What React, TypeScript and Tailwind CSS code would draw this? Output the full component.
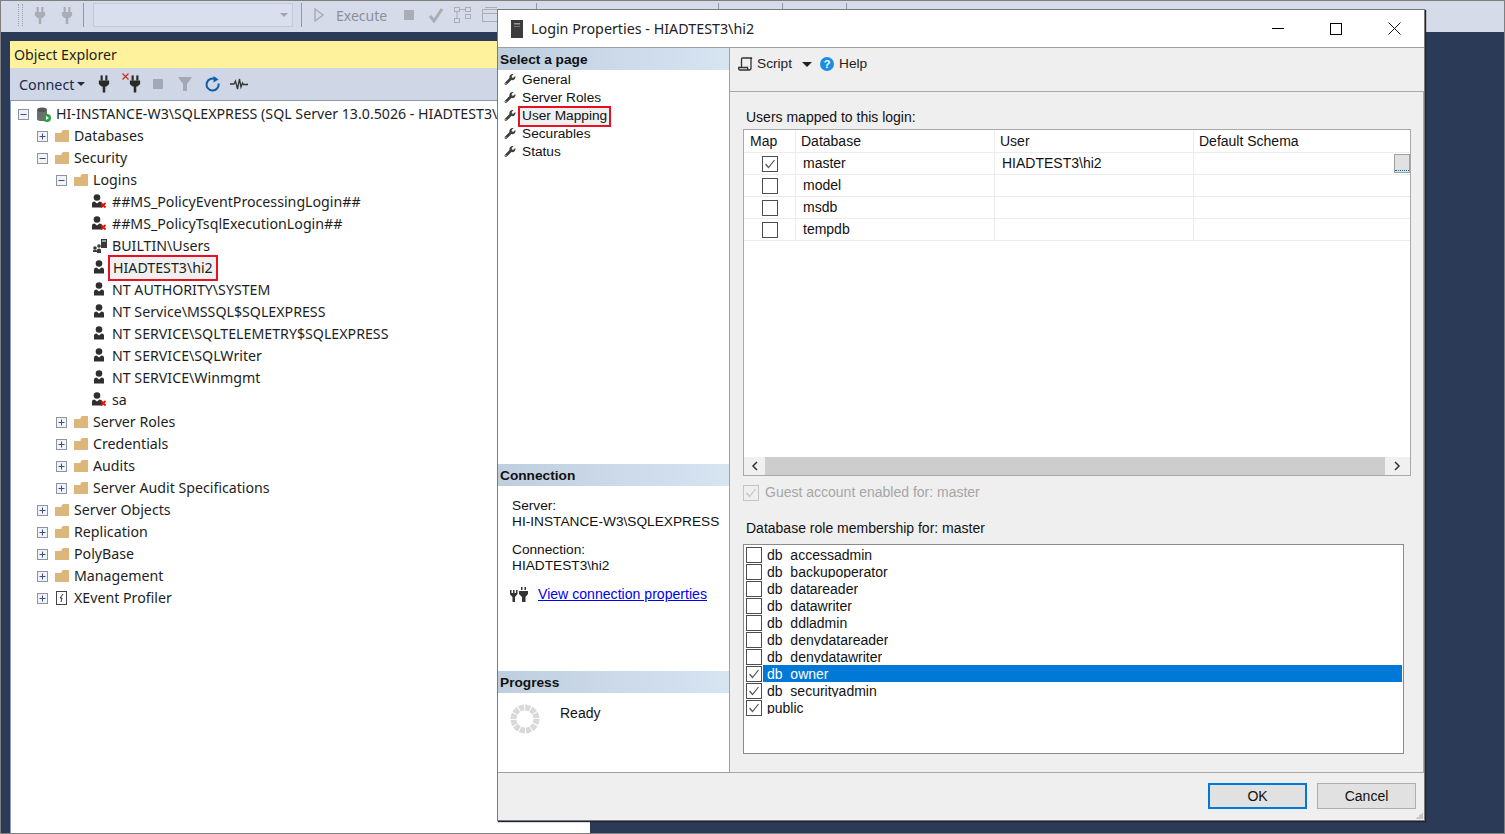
import { FaWrench } from "react-icons/fa";

const segoe = "font-['Noto_Sans',sans-serif]";
const arial = "font-['Liberation_Sans',Arial,sans-serif]";

function Plug({ className = "" }: { className?: string }) {
  return (
    <svg viewBox="0 0 14 20" className={className} fill="currentColor">
      <rect x="3" y="0" width="2.5" height="6" />
      <rect x="8.5" y="0" width="2.5" height="6" />
      <path d="M1 6h12v4l-3 3H8.5v7h-3v-7H4l-3-3z" />
    </svg>
  );
}

function Person({ off }: { off?: boolean }) {
  return (
    <svg width="16" height="16" viewBox="0 0 16 16" className="shrink-0">
      <g transform={off ? "translate(-1 0)" : "translate(1 0)"}>
        <circle cx="6" cy="3.5" r="3.3" fill="#2f2f2f" />
        <path d="M1 13.500V9.500Q1 7.500 3.500 7.500L6 9.500l2.500-2Q11 7.500 11 9.500v4z" fill="#2f2f2f" />
      </g>
      {off ? (
        <path d="M9 9l4.500 4.500m0-4.500L9 13.500" stroke="#e51400" strokeWidth="1.800" />
      ) : null}
    </svg>
  );
}

function Group() {
  return (
    <svg width="16" height="16" viewBox="0 0 16 16" className="shrink-0">
      <rect x="9" y="1" width="6" height="9" fill="#3a3a3a" />
      <rect x="10" y="2.500" width="4" height="1" fill="#fff" />
      <circle cx="7" cy="8" r="1.800" fill="#3a3a3a" />
      <circle cx="3" cy="10" r="1.800" fill="#3a3a3a" />
      <path d="M5 15v-3q0-1.500 2-1.500t2 1.500v3zM1 14v-1.500Q1 11.800 3 11.800t2 .7V14z" fill="#3a3a3a" />
    </svg>
  );
}

function Folder() {
  return (
    <svg width="14" height="12" viewBox="0 0 14 12" className="shrink-0">
      <path d="M0 3h6.500V1.500L8 0h6v12H0z" fill="#dcb67a" />
    </svg>
  );
}

function Expander({ open }: { open?: boolean }) {
  return (
    <svg width="11" height="11" viewBox="0 0 11 11" className="shrink-0">
      <rect x=".5" y=".5" width="10" height="10" fill="#f2f3f7" stroke="#8d93a3" />
      <rect x="2.500" y="5" width="6" height="1" fill="#3b4f81" />
      {open ? null : <rect x="5" y="2.500" width="1" height="6" fill="#3b4f81" />}
    </svg>
  );
}

function Check({ checked, disabled, className = "" }: { checked?: boolean; disabled?: boolean; className?: string }) {
  return (
    <span
      className={`flex h-4 w-4 shrink-0 items-center justify-center border bg-transparent ${
        disabled ? "border-[#c4c4c4]" : "border-[#4d4d4d] bg-white"
      } ${className}`}
    >
      {checked ? (
        <svg width="12" height="10" viewBox="0 0 12 10" fill="none">
          <path d="M1.500 5l3 3.500 6-7.500" stroke={disabled ? "#c4c4c4" : "#555"} strokeWidth="1.200" />
        </svg>
      ) : null}
    </span>
  );
}

type Node = { label: string; level: number; kind: "db" | "folder" | "xe" | "user" | "off" | "group"; open?: boolean; leaf?: boolean; mark?: boolean };

const nodes: Node[] = [
  { label: "HI-INSTANCE-W3\\SQLEXPRESS (SQL Server 13.0.5026 - HIADTEST3\\hi2)", level: 0, kind: "db", open: true },
  { label: "Databases", level: 1, kind: "folder" },
  { label: "Security", level: 1, kind: "folder", open: true },
  { label: "Logins", level: 2, kind: "folder", open: true },
  { label: "##MS_PolicyEventProcessingLogin##", level: 3, kind: "off", leaf: true },
  { label: "##MS_PolicyTsqlExecutionLogin##", level: 3, kind: "off", leaf: true },
  { label: "BUILTIN\\Users", level: 3, kind: "group", leaf: true },
  { label: "HIADTEST3\\hi2", level: 3, kind: "user", leaf: true, mark: true },
  { label: "NT AUTHORITY\\SYSTEM", level: 3, kind: "user", leaf: true },
  { label: "NT Service\\MSSQL$SQLEXPRESS", level: 3, kind: "user", leaf: true },
  { label: "NT SERVICE\\SQLTELEMETRY$SQLEXPRESS", level: 3, kind: "user", leaf: true },
  { label: "NT SERVICE\\SQLWriter", level: 3, kind: "user", leaf: true },
  { label: "NT SERVICE\\Winmgmt", level: 3, kind: "user", leaf: true },
  { label: "sa", level: 3, kind: "off", leaf: true },
  { label: "Server Roles", level: 2, kind: "folder" },
  { label: "Credentials", level: 2, kind: "folder" },
  { label: "Audits", level: 2, kind: "folder" },
  { label: "Server Audit Specifications", level: 2, kind: "folder" },
  { label: "Server Objects", level: 1, kind: "folder" },
  { label: "Replication", level: 1, kind: "folder" },
  { label: "PolyBase", level: 1, kind: "folder" },
  { label: "Management", level: 1, kind: "folder" },
  { label: "XEvent Profiler", level: 1, kind: "xe" },
];

const indent = ["pl-[7px]", "pl-[26px]", "pl-[45px]", "pl-[63px]"];

function NodeIcon({ kind }: { kind: Node["kind"] }) {
  if (kind === "folder") return <Folder />;
  if (kind === "user") return <Person />;
  if (kind === "off") return <Person off />;
  if (kind === "group") return <Group />;
  if (kind === "xe")
    return (
      <svg width="14" height="14" viewBox="0 0 14 14" className="shrink-0">
        <rect x="1.500" y=".5" width="10" height="13" fill="#fff" stroke="#444" />
        <path d="M8 3L5 7h2l-1 4" stroke="#333" fill="none" />
      </svg>
    );
  return (
    <svg width="15" height="15" viewBox="0 0 15 15" className="shrink-0">
      <ellipse cx="6" cy="3" rx="5" ry="2.500" fill="#555" />
      <path d="M1 3v9q0 2 5 2t5-2V3q0 2-5 2T1 3z" fill="#6e6e6e" />
      <circle cx="11" cy="11" r="4" fill="#2f9e44" />
      <path d="M10 9l3 2-3 2z" fill="#fff" />
    </svg>
  );
}

function TreeRow({ node }: { node: Node }) {
  const slot = node.level === 1 || node.level === 2 ? "w-[19px]" : "w-[20px]";
  return (
    <div className={`flex h-[22px] items-center whitespace-nowrap ${indent[node.level]}`}>
      <span className="flex w-[11px] shrink-0">{node.leaf ? null : <Expander open={node.open} />}</span>
      <span className={`ml-[7px] flex ${slot} shrink-0 items-center`}>
        <NodeIcon kind={node.kind} />
      </span>
      <span
        className={
          node.mark
            ? "relative z-0 -mx-[2px] bg-[#f0f0f0] px-[3px] outline-2 outline-[#e81123]"
            : ""
        }
      >
        {node.label}
      </span>
    </div>
  );
}

function TopToolbar() {
  return (
    <div className={`flex h-[31px] shrink-0 items-center bg-[#d5dbe9] pb-[3px] text-[#8b8f99] ${segoe}`}>
      <span className="ml-[17px] h-[22px] w-[5px] border-x border-dotted border-[#9aa0ad]" />
      <Plug className="ml-[11px] h-[17px] w-[12px] text-[#a9adb6]" />
      <Plug className="ml-[14px] h-[17px] w-[14px] text-[#a9adb6]" />
      <span className="ml-[9px] h-[24px] w-px bg-[#9097a6]" />
      <span className="ml-[9px] flex h-[24px] w-[200px] items-center justify-end border border-[#c3cbdb] bg-[#d9dfec] pr-[4px]">
        <span className="h-0 w-0 border-x-[4px] border-t-[4px] border-x-transparent border-t-[#a0a4ae]" />
      </span>
      <span className="ml-[8px] h-[24px] w-px bg-[#9097a6]" />
      <svg width="12" height="14" viewBox="0 0 12 14" className="ml-[11px]" fill="none">
        <path d="M2 1l8 6-8 6z" stroke="#a9adb6" strokeWidth="1.500" />
      </svg>
      <span className="ml-[11px] w-[51px] text-[14px] whitespace-nowrap">Execute</span>
      <span className="ml-[17px] h-[10px] w-[10px] bg-[#a9adb6]" />
      <svg width="16" height="15" viewBox="0 0 16 15" className="ml-[14px]" fill="none">
        <path d="M2 8l4 5 8-12" stroke="#a9adb6" strokeWidth="3" />
      </svg>
      <svg width="20" height="18" viewBox="0 0 20 18" className="ml-[9px]" fill="none" stroke="#a9adb6">
        <rect x="1.500" y="1.500" width="5" height="4" />
        <rect x="12.500" y="1.500" width="5" height="4" />
        <rect x="1.500" y="12.500" width="5" height="4" />
        <rect x="12.500" y="8.500" width="5" height="4" />
        <path d="M4 6v6M7 3.500h5" />
      </svg>
      <svg width="18" height="18" viewBox="0 0 18 18" className="ml-[8px]" fill="none" stroke="#a9adb6">
        <rect x="1.500" y="3.500" width="15" height="12" />
        <path d="M1.500 7.500h15M4 1.500h12" />
      </svg>
      <span className="ml-[37px] h-[24px] w-px bg-[#9097a6]" />
      <span className="ml-[181px] h-[24px] w-px bg-[#9097a6]" />
      <span className="ml-[63px] h-[24px] w-px bg-[#9097a6]" />
      <span className="ml-[63px] h-[24px] w-px bg-[#9097a6]" />
    </div>
  );
}

function ObjectExplorer() {
  return (
    <div className={`flex w-[580px] flex-1 flex-col text-[14.200px] text-[#1e1e1e] ${segoe}`}>
      <div className="flex h-[27px] shrink-0 items-center bg-[#fff29d] pl-[4px]">Object Explorer</div>
      <div className="flex h-[32px] shrink-0 items-center bg-[#cfd6e5] pl-[9px] text-[#1c2b4a]">
        <span className="mt-px w-[54px] text-[14.300px]">Connect</span>
        <span className="ml-[4px] h-0 w-0 border-x-[4px] border-t-[4px] border-x-transparent border-t-[#1c2b4a]" />
        <Plug className="ml-[13px] h-[18px] w-[12px] text-[#2a2a2a]" />
        <span className="relative ml-[12px] flex w-[19px] justify-end">
          <svg width="7" height="7" viewBox="0 0 7 7" className="absolute -top-[2px] left-0" fill="none">
            <path d="M.5.5l6 6m0-6l-6 6" stroke="#c8321e" strokeWidth="1.200" />
          </svg>
          <Plug className="h-[18px] w-[12px] text-[#2a2a2a]" />
        </span>
        <span className="ml-[12px] h-[10px] w-[10px] bg-[#a3a8b4]" />
        <svg width="14" height="16" viewBox="0 0 14 16" className="ml-[15px]">
          <path d="M0 1h14L9 8v7H5V8z" fill="#a3a8b4" />
        </svg>
        <svg width="16" height="17" viewBox="0 0 16 17" className="ml-[13px]" fill="none">
          <path d="M13.500 7.500a6 6 0 1 1-3-4.200" stroke="#0e5ea8" strokeWidth="2" />
          <path d="M8.500 0l5 3.500-5 3z" fill="#0e5ea8" />
        </svg>
        <svg width="18" height="12" viewBox="0 0 18 12" className="ml-[9px]" fill="none">
          <path d="M0 6h4l1.500-3L7.500 11 9.500 1 11 9l1.500-4 1 1.500H18" stroke="#333" strokeWidth="1.300" />
        </svg>
      </div>
      <div className="flex-1 overflow-hidden border-t border-l border-[#8e9bb3] bg-white pt-[2px]">
        {nodes.map((n) => (
          <TreeRow key={n.label} node={n} />
        ))}
      </div>
    </div>
  );
}

function SideHeader({ children }: { children: string }) {
  return (
    <div className="flex h-[22px] shrink-0 items-center bg-gradient-to-r from-[#bfcede] to-[#d7e4f2] pt-[2px] pl-[2px] text-[13.700px] font-bold text-[#111]">
      {children}
    </div>
  );
}

const pages = ["General", "Server Roles", "User Mapping", "Securables", "Status"];

function Sidebar() {
  return (
    <div className="flex w-[232px] shrink-0 flex-col border-r border-b border-[#a0a0a0] bg-white text-[13.700px] text-[#111]">
      <SideHeader>Select a page</SideHeader>
      <div className="h-[394px] pt-px pl-[6px]">
        {pages.map((p) => (
          <div key={p} className="flex h-[18px] items-center">
            <FaWrench className="mr-[6px] -mt-[2px] h-[11px] w-[12px] shrink-0 text-[#3f3f3f]" />
            <span className={p === "User Mapping" ? "-mx-[2px] flex h-[17px] items-center bg-[#f0f0f0] px-[2px] outline-2 outline-[#e81123]" : ""}>{p}</span>
          </div>
        ))}
      </div>
      <SideHeader>Connection</SideHeader>
      <div className="h-[185px] pt-[12px] pl-[14px] leading-[16px]">
        <div>Server:</div>
        <div>HI-INSTANCE-W3\SQLEXPRESS</div>
        <div className="mt-[12px]">Connection:</div>
        <div>HIADTEST3\hi2</div>
        <div className="mt-[11px] -ml-[2px] flex items-center">
          <svg width="18" height="18" viewBox="0 0 18 18" className="shrink-0" fill="#333">
            <path d="M0 5h1.500v3h1.500V5h1.500v3H6V5h1.500v4L5 12v5H2.500v-5L0 9.500zM9 6h9v3l-2.500 3v5H12v-5L9 9zM11 2h1.500v3H11zM14.500 2H16v3h-1.500z" />
          </svg>
          <span className="ml-[10px] text-[14.100px] text-[#0000ee] underline">View connection properties</span>
        </div>
      </div>
      <SideHeader>Progress</SideHeader>
      <div className="flex flex-1 items-start pt-[11px] pl-[12px]">
        <svg width="30" height="30" viewBox="0 0 30 30" className="shrink-0" fill="none">
          <circle cx="15" cy="15" r="11.500" stroke="#d9d9d9" strokeWidth="6" strokeDasharray="5 1" />
        </svg>
        <span className="-mt-px ml-[20px] text-[14px]">Ready</span>
      </div>
    </div>
  );
}

const dbs = ["master", "model", "msdb", "tempdb"];
const gridCols = "grid grid-cols-[52px_199px_199px_1fr]";

function UserGrid() {
  return (
    <div className="mt-[3px] flex h-[347px] w-[668px] flex-col border border-[#a9a9a9] bg-white">
      <div className={`${gridCols} h-[23px] shrink-0 items-stretch border-b border-[#ececec]`}>
        {["Map", "Database", "User", "Default Schema"].map((h) => (
          <div key={h} className="flex items-center border-r border-[#ececec] pl-[5px] first:pl-[6px] last:border-r-0">
            {h}
          </div>
        ))}
      </div>
      {dbs.map((d, i) => (
        <div key={d} className={`${gridCols} h-[22px] shrink-0 border-b border-[#ececec]`}>
          <div className="flex items-center justify-center border-r border-[#ececec]">
            <Check checked={i === 0} />
          </div>
          <div className="flex items-center border-r border-[#ececec] pl-[7px]">{d}</div>
          <div className="flex items-center border-r border-[#ececec] pl-[7px]">{i === 0 ? "HIADTEST3\\hi2" : ""}</div>
          <div className="flex items-center justify-end">
            {i === 0 ? (
              <span className="flex h-[19px] w-[16px] flex-col justify-end border border-[#a0a0a0] bg-[#e1e1e1] pb-[1px]">
                <span className="h-px w-full border-b border-dotted border-[#0066bb]" />
              </span>
            ) : null}
          </div>
        </div>
      ))}
      <div className="flex-1" />
      <div className="flex h-[18px] shrink-0 items-center bg-[#f0f0f0]">
        <span className="flex w-[21px] justify-center text-[#333]">
          <svg width="7" height="10" viewBox="0 0 7 10" fill="none">
            <path d="M6 1L2 5l4 4" stroke="#333" strokeWidth="1.500" />
          </svg>
        </span>
        <span className="h-full flex-1 bg-[#cdcdcd]" />
        <span className="flex w-[25px] justify-center">
          <svg width="7" height="10" viewBox="0 0 7 10" fill="none">
            <path d="M1 1l4 4-4 4" stroke="#333" strokeWidth="1.500" />
          </svg>
        </span>
      </div>
    </div>
  );
}

const roles = [
  { name: "db_accessadmin" },
  { name: "db_backupoperator" },
  { name: "db_datareader" },
  { name: "db_datawriter" },
  { name: "db_ddladmin" },
  { name: "db_denydatareader" },
  { name: "db_denydatawriter" },
  { name: "db_owner", on: true, sel: true },
  { name: "db_securityadmin", on: true },
  { name: "public", on: true },
];

function RoleList() {
  return (
    <div className="mt-[7px] h-[210px] w-[661px] border border-[#8a8a8a] bg-white pt-px pr-px pl-[2px]">
      {roles.map((r) => (
        <div key={r.name} className="flex h-[17px] items-center">
          <Check checked={r.on} />
          <span className={`ml-px flex h-[17px] flex-1 pl-[4px] ${r.sel ? "bg-[#0078d7] text-white" : ""}`}>
            {/* the list clips each name just under the baseline, so the underscores disappear */}
            <span className="mt-[2px] block h-[13px] overflow-hidden leading-[15px]">{r.name}</span>
          </span>
        </div>
      ))}
    </div>
  );
}

function Dialog() {
  return (
    <div className={`absolute top-[8px] left-[496px] flex h-[812px] w-[928px] flex-col border border-[#7b7b7b] bg-[#efefef] shadow-[1px_1px_1px_#1a2233] ${arial}`}>
      <div className={`flex h-[38px] shrink-0 items-center border-b border-[#a0a0a0] bg-white ${segoe}`}>
        <svg width="12" height="18" viewBox="0 0 12 18" className="ml-[13px] shrink-0">
          <rect width="12" height="18" fill="#3c3c3c" />
          <rect x="3" y="3" width="6" height="1.500" fill="#9a9a9a" />
          <rect x="3" y="6" width="6" height="1" fill="#777" />
        </svg>
        <span className="ml-[8px] flex-1 text-[14.300px] text-[#222]">Login Properties - HIADTEST3\hi2</span>
        <span className="flex w-[58px] justify-center">
          <span className="h-px w-[12px] bg-black" />
        </span>
        <span className="flex w-[58px] justify-center">
          <span className="h-[12px] w-[12px] border border-black" />
        </span>
        <span className="flex w-[59px] justify-center">
          <svg width="13" height="13" viewBox="0 0 13 13" fill="none">
            <path d="M.5.5l12 12m0-12l-12 12" stroke="#111" />
          </svg>
        </span>
      </div>
      <div className="flex h-[725px] shrink-0">
        <Sidebar />
        <div className="flex min-w-0 flex-1 flex-col text-[14px] text-[#111]">
          <div className="flex h-[43px] shrink-0 items-start pt-[9px] pl-[8px] text-[13.700px] text-[#222]">
            <svg width="15" height="14" viewBox="0 0 15 14" fill="none" className="shrink-0" stroke="#333" strokeWidth="1.300">
              <path d="M3.500 10.500V2q0-1 1-1H14q-1 .5-1 1.500V11q0 2-2 2H2q-1.500 0-1.500-2.500h9q0 1 .5 2" />
            </svg>
            <span className="-mt-px ml-[4px] leading-[16px]">Script</span>
            <span className="mt-[5px] ml-[10px] h-0 w-0 border-x-[5px] border-t-[5px] border-x-transparent border-t-[#222]" />
            <span className="ml-[8px] flex h-[14px] w-[14px] items-center justify-center rounded-full bg-[#1e8fe0] text-[11px] font-bold text-white">?</span>
            <span className="-mt-px ml-[5px] leading-[16px]">Help</span>
          </div>
          <div className="flex-1 border-t border-r border-b border-[#a9a9a9] pl-[13px]">
            <div className="mt-[17px] flex h-[17px] items-center pl-[3px]">Users mapped to this login:</div>
            <UserGrid />
            <div className="mt-[8px] flex h-[17px] items-center text-[#a6a6a6]">
              <Check checked disabled />
              <span className="ml-[6px]">Guest account enabled for: master</span>
            </div>
            <div className="mt-[19px] flex h-[17px] items-center pl-[3px]">Database role membership for: master</div>
            <RoleList />
          </div>
        </div>
      </div>
      <div className="relative flex flex-1 items-start justify-end gap-[10px] pt-[10px] pr-[8px] text-[14px] text-[#111]">
        <span className="flex h-[26px] w-[99px] items-center justify-center border-2 border-[#0078d7] bg-[#e1e1e1]">OK</span>
        <span className="flex h-[26px] w-[99px] items-center justify-center border border-[#adadad] bg-[#e1e1e1]">Cancel</span>
        <span className="absolute right-[1px] bottom-[1px] h-[7px] w-[7px] bg-[linear-gradient(135deg,transparent_50%,#c8c8c8_50%)]" />
      </div>
    </div>
  );
}

export default function App() {
  return (
    <div className="relative flex h-[834px] w-[1505px] flex-col overflow-hidden border border-[#7f7f7f] bg-[#2b3a57]">
      <TopToolbar />
      <div className="flex min-h-0 flex-1 flex-col pt-[9px] pl-[9px]">
        <ObjectExplorer />
      </div>
      <Dialog />
    </div>
  );
}
